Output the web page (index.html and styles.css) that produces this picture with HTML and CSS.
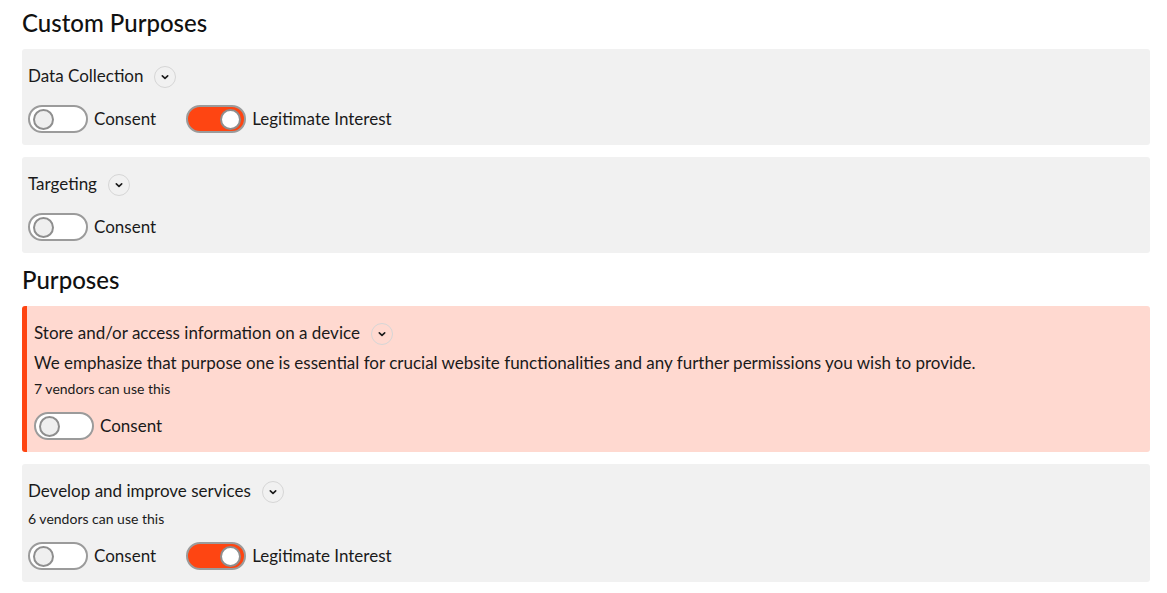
FILE: index.html
```html
<!DOCTYPE html>
<html lang="en">
<head>
<meta charset="utf-8">
<title>Purposes</title>
<link rel="stylesheet" href="styles.css">
</head>
<body>
<div class="page">
  <h2 class="section-title">Custom Purposes</h2>

  <div class="card">
    <div class="card-head">
      <span class="card-title">Data Collection</span>
      <button class="chev" aria-label="expand"><svg viewBox="0 0 10 10" width="10" height="10"><path d="M2.3 3.8 L5 6.4 L7.7 3.8" fill="none" stroke="#1a1a1a" stroke-width="1.6" stroke-linecap="round" stroke-linejoin="round"/></svg></button>
    </div>
    <div class="toggles">
      <label class="tg"><span class="switch"><span class="knob"></span></span><span class="tg-label">Consent</span></label>
      <label class="tg"><span class="switch on"><span class="knob"></span></span><span class="tg-label">Legitimate Interest</span></label>
    </div>
  </div>

  <div class="card">
    <div class="card-head">
      <span class="card-title">Targeting</span>
      <button class="chev" aria-label="expand"><svg viewBox="0 0 10 10" width="10" height="10"><path d="M2.3 3.8 L5 6.4 L7.7 3.8" fill="none" stroke="#1a1a1a" stroke-width="1.6" stroke-linecap="round" stroke-linejoin="round"/></svg></button>
    </div>
    <div class="toggles">
      <label class="tg"><span class="switch"><span class="knob"></span></span><span class="tg-label">Consent</span></label>
    </div>
  </div>

  <h2 class="section-title">Purposes</h2>

  <div class="card highlight">
    <div class="card-head">
      <span class="card-title">Store and/or access information on a device</span>
      <button class="chev" aria-label="expand"><svg viewBox="0 0 10 10" width="10" height="10"><path d="M2.3 3.8 L5 6.4 L7.7 3.8" fill="none" stroke="#1a1a1a" stroke-width="1.6" stroke-linecap="round" stroke-linejoin="round"/></svg></button>
    </div>
    <p class="desc">We emphasize that purpose one is essential for crucial website functionalities and any further permissions you wish to provide.</p>
    <p class="vendors">7 vendors can use this</p>
    <div class="toggles">
      <label class="tg"><span class="switch"><span class="knob"></span></span><span class="tg-label">Consent</span></label>
    </div>
  </div>

  <div class="card">
    <div class="card-head">
      <span class="card-title">Develop and improve services</span>
      <button class="chev" aria-label="expand"><svg viewBox="0 0 10 10" width="10" height="10"><path d="M2.3 3.8 L5 6.4 L7.7 3.8" fill="none" stroke="#1a1a1a" stroke-width="1.6" stroke-linecap="round" stroke-linejoin="round"/></svg></button>
    </div>
    <p class="vendors">6 vendors can use this</p>
    <div class="toggles">
      <label class="tg"><span class="switch"><span class="knob"></span></span><span class="tg-label">Consent</span></label>
      <label class="tg"><span class="switch on"><span class="knob"></span></span><span class="tg-label">Legitimate Interest</span></label>
    </div>
  </div>
</div>
</body>
</html>
```
FILE: styles.css
```css
* { box-sizing: border-box; }
html, body { margin: 0; padding: 0; background: #fff; }
body {
  font-family: "Lato", "Liberation Sans", sans-serif;
  color: #1a1a1a;
}
.page {
  padding: 8px 17px 0 22px;
}
.section-title {
  margin: 0 0 12px;
  font-size: 24px;
  line-height: 29px;
  font-weight: 500;
  color: #111;
}
.card {
  background: #f1f1f1;
  border-radius: 3px;
  padding: 12px 6px 12px 6px;
  margin-bottom: 12px;
}
.card.highlight {
  background: #ffd9d0;
  border-left: 5px solid #fe4512;
  padding-left: 7px;
}
.card-head {
  display: flex;
  align-items: center;
  height: 30px;
}
.card-title {
  font-size: 17px;
  line-height: 20px;
}
.chev {
  margin-left: 11px;
  width: 22px;
  height: 22px;
  border-radius: 50%;
  border: 1px solid #d6d6d6;
  background: transparent;
  padding: 0;
  display: flex;
  align-items: center;
  justify-content: center;
  margin-top: 2px;
}
.desc {
  margin: 5px 0 7px;
  font-size: 17px;
  line-height: 20px;
}
.vendors {
  margin: 4px 0 15px;
  font-size: 14px;
  line-height: 17px;
}
.toggles {
  display: flex;
  align-items: center;
  gap: 30px;
  margin-top: 14px;
}
.tg {
  display: flex;
  align-items: center;
  gap: 6px;
  font-size: 17px;
  line-height: 20px;
}
.switch {
  width: 60px;
  height: 28px;
  border-radius: 14px;
  border: 2px solid #9b9b9b;
  background: #fff;
  display: flex;
  align-items: center;
  padding: 0 3px;
}
.switch.on {
  background: #fe4512;
  justify-content: flex-end;
}
.knob {
  width: 21px;
  height: 21px;
  border-radius: 50%;
  border: 2px solid #8e8e8e;
  background: #efefef;
}
.switch.on .knob {
  background: #fff;
}
```
